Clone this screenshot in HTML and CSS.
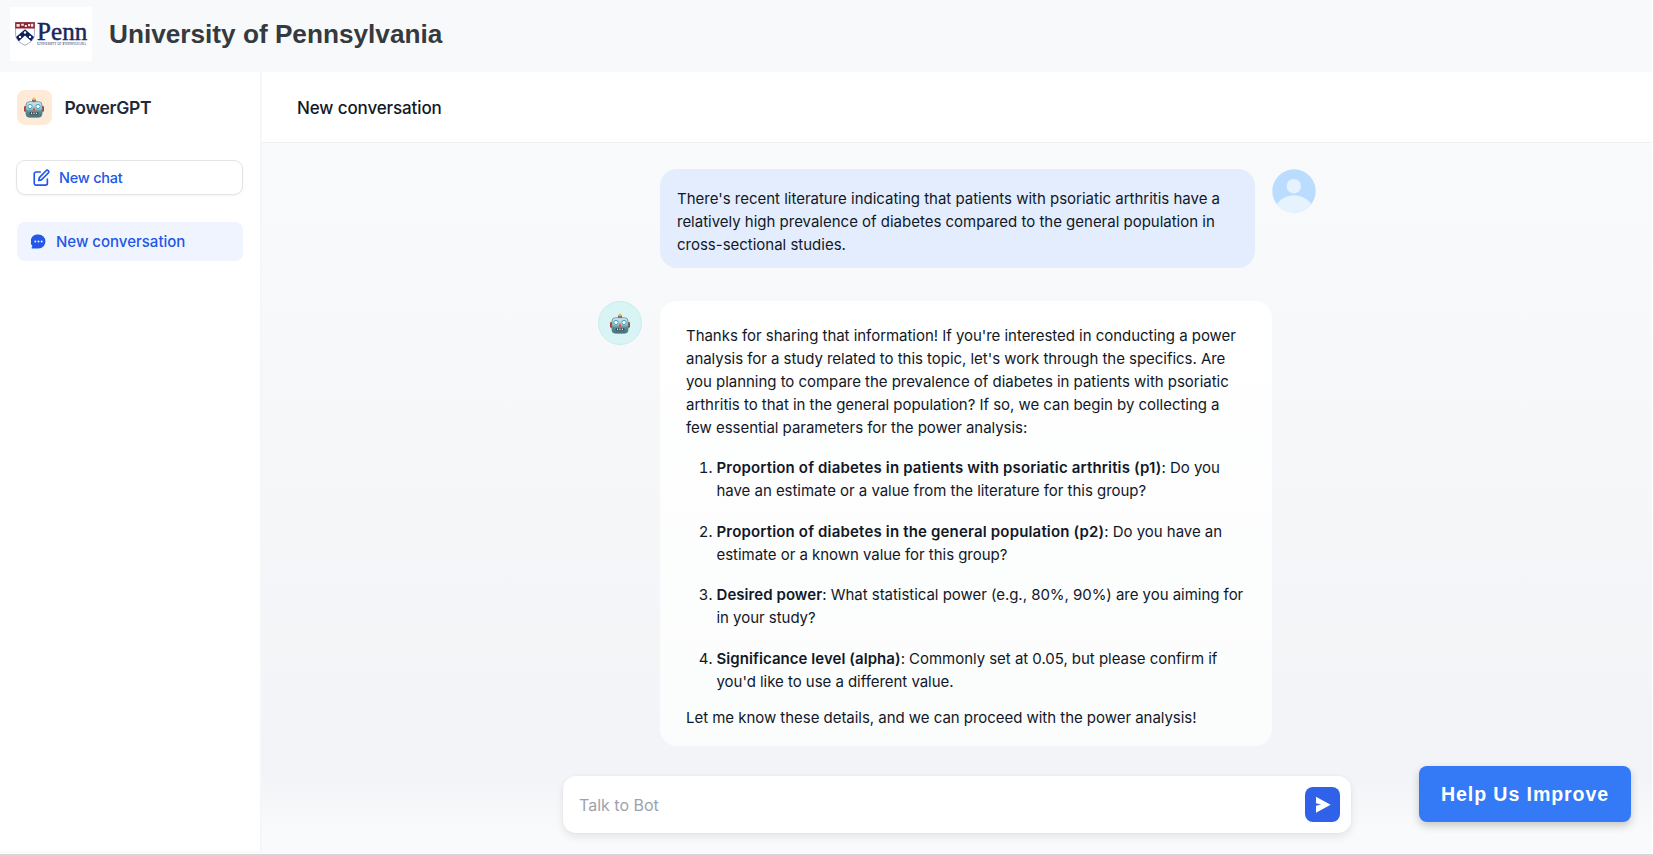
FILE: index.html
```html
<!DOCTYPE html>
<html lang="en">
<head>
<meta charset="utf-8">
<title>PowerGPT</title>
<link rel="stylesheet" href="styles.css">
</head>
<body>
<svg class="defs" aria-hidden="true">
  <defs>
    <linearGradient id="metal" x1="0" y1="0" x2="0" y2="1">
      <stop offset="0" stop-color="#cfe6e8"/><stop offset=".45" stop-color="#a5c6ca"/><stop offset=".6" stop-color="#5f929b"/><stop offset="1" stop-color="#3d6f7a"/>
    </linearGradient>
    <symbol id="robot" viewBox="0 0 20 20">
      <rect x="0" y="8.4" width="3" height="5.8" rx="1.2" fill="#a8403f"/>
      <rect x="17" y="8.4" width="3" height="5.8" rx="1.2" fill="#a8403f"/>
      <rect x="8.1" y="2" width="3.8" height="2.8" fill="#55508c"/>
      <circle cx="10" cy="1.5" r="1.5" fill="#f5b63f"/>
      <rect x="1.9" y="4.2" width="16.2" height="15.6" rx="3.6" fill="url(#metal)" stroke="#56828a" stroke-width=".7"/>
      <circle cx="6" cy="9" r="2.1" fill="#fff" stroke="#35a5c8" stroke-width="1"/>
      <circle cx="14" cy="9" r="2.1" fill="#fff" stroke="#35a5c8" stroke-width="1"/>
      <path d="M10 9.600l1.500 3.300h-3z" fill="#e2483d"/>
      <rect x="5.6" y="14.6" width="8.8" height="2.3" rx=".8" fill="#42484c"/>
      <path d="M7 15h1.100v1.500H7zM9.400 15h1.100v1.500H9.400zM11.800 15h1.100v1.500h-1.100z" fill="#e9eeee"/>
    </symbol>
  </defs>
</svg>
<div class="app">
  <header class="banner">
    <div class="logo">
      <svg class="shield" viewBox="0 0 20 24">
        <path d="M.6.6h18.800v12c0 5-4.500 8.400-9.400 10.700C5.100 21 .6 17.600.6 12.600z" fill="#fff" stroke="#8d97b5" stroke-width=".8"/>
        <path d="M.2.2h19.600v6.300H.2z" fill="#8f2430"/>
        <path d="M1.500 2h3.200v2.800H1.500zM6.200 1.800h2.600v2H6.200zM9.800 3h2v1.900h-2zM13 1.900h2.200v2.400H13zM16 1.800h2.300v2.900H16z" fill="#f4e9ec"/>
        <path d="M10 7.200l9 7.800-2.800 4.200L10 13.600l-6.200 5.600L1 15z" fill="#10205f"/>
        <g fill="#fff"><circle cx="10" cy="10.500" r="1.200"/><circle cx="5" cy="14.900" r="1.200"/><circle cx="15" cy="14.900" r="1.200"/></g>
      </svg>
      <div class="wordmark"><span class="penn">Penn</span><span class="penn-sub">University of Pennsylvania</span></div>
    </div>
    <h1 class="school">University of Pennsylvania</h1>
  </header>
  <div class="body">
    <aside class="sidebar">
      <div class="brand">
        <div class="brand-icon"><svg class="robot"><use href="#robot"/></svg></div>
        <span class="brand-name">PowerGPT</span>
      </div>
      <button class="new-chat">
        <svg class="edit" viewBox="0 0 24 24" fill="none" stroke="currentColor" stroke-width="2.200" stroke-linecap="round" stroke-linejoin="round"><path d="M11 4H5.500A2.500 2.500 0 0 0 3 6.500v12.500A2.500 2.500 0 0 0 5.500 21.500h12.500a2.500 2.500 0 0 0 2.500-2.500V13.500"/><path d="M18.700 2.300a2.100 2.100 0 0 1 3 3L12.500 14.500 9 15.300l.8-3.800z"/></svg>
        <span>New chat</span>
      </button>
      <div class="conversation">
        <svg class="bubble-icon" viewBox="0 0 16 16"><path d="M8 .6a7.400 7.400 0 1 1 0 14.800H1.200c-.6 0-.8-.5-.5-1l.8-1.500A7.400 7.400 0 0 1 8 .6z" fill="currentColor"/><g fill="#eff4ff"><circle cx="4.600" cy="8" r="1.050"/><circle cx="8" cy="8" r="1.050"/><circle cx="11.400" cy="8" r="1.050"/></g></svg>
        <span>New conversation</span>
      </div>
    </aside>
    <main class="main">
      <div class="chat-title"><span>New conversation</span></div>
      <div class="chat">
        <div class="row row-user">
          <div class="msg msg-user">There's recent literature indicating that patients with psoriatic arthritis have a<br>relatively high prevalence of diabetes compared to the general population in<br>cross-sectional studies.</div>
          <svg class="avatar" viewBox="0 0 44 44"><clipPath id="round"><circle cx="22" cy="22" r="21.700"/></clipPath><g clip-path="url(#round)"><rect width="44" height="44" fill="#b9dcff"/><circle cx="21.800" cy="17.200" r="7.200" fill="#e6f3ff"/><circle cx="22" cy="48" r="21.700" fill="#e6f3ff"/></g></svg>
        </div>
        <div class="row row-bot">
          <div class="avatar bot-avatar"><svg class="robot"><use href="#robot"/></svg></div>
          <div class="msg msg-bot">
            <p>Thanks for sharing that information! If you're interested in conducting a power<br>analysis for a study related to this topic, let's work through the specifics. Are<br>you planning to compare the prevalence of diabetes in patients with psoriatic<br>arthritis to that in the general population? If so, we can begin by collecting a<br>few essential parameters for the power analysis:</p>
            <ol class="params">
              <li><b>Proportion of diabetes in patients with psoriatic arthritis (p1)</b>: Do you<br>have an estimate or a value from the literature for this group?</li>
              <li><b>Proportion of diabetes in the general population (p2)</b>: Do you have an<br>estimate or a known value for this group?</li>
              <li><b class="tight">Desired power</b>: What statistical power (e.g., 80%, 90%) are you aiming for<br>in your study?</li>
              <li><b class="tight">Significance level (alpha)</b>: Commonly set at 0.05, but please confirm if<br>you'd like to use a different value.</li>
            </ol>
            <p>Let me know these details, and we can proceed with the power analysis!</p>
          </div>
        </div>
        <div class="composer">
          <span class="placeholder">Talk to Bot</span>
          <button class="send" aria-label="Send"><svg viewBox="0 0 35 35"><path d="M11 9.700v6.600l5 1.200-5 1.200v7L25.600 17.700z" fill="#fff"/></svg></button>
        </div>
      </div>
    </main>
  </div>
</div>
<button class="help">Help Us Improve</button>
</body>
</html>
```
FILE: styles.css
```css
* { box-sizing: border-box; }
body { margin: 0; font-family: Inter, "Liberation Sans", sans-serif; color: #111827; overflow: hidden; }
button { font-family: inherit; margin: 0; }
.defs { position: absolute; width: 0; height: 0; }
.app { height: 856px; display: flex; flex-direction: column; border-right: 1px solid #d9d9dc; border-bottom: 2px solid #d6d6d8; background: #fff; padding: 0 1px 1px 0; }

.banner { height: 72px; flex: none; display: flex; align-items: flex-start; padding: 7px 10px; gap: 17px; background: #f8f9fb; }
.logo { width: 82px; height: 54px; background: #fff; display: flex; padding: 15px 0 0 5px; gap: 2px; }
.shield { width: 20px; height: 24px; flex: none; }
.wordmark { display: flex; flex-direction: column; color: #17285f; font-family: "Liberation Serif", serif; white-space: nowrap; }
.penn { font-size: 25px; line-height: 19px; letter-spacing: .1px; -webkit-text-stroke: .5px #17285f; }
.penn-sub { font-size: 4.800px; line-height: 5px; font-variant: small-caps; }
.school { margin: 0; font: bold 26.200px/54px "Liberation Sans", Arial, sans-serif; color: #343a40; }

.body { flex: 1; display: flex; min-height: 0; background: #f9fafb; }
.sidebar { width: 262px; flex: none; margin-bottom: 2px; background: #fff; border-right: 2px solid #f5f6f8; padding: 18px 17px 0; }
.brand { display: flex; align-items: center; gap: 13px; height: 35px; margin-left: -.5px; }
.brand-icon { width: 35px; height: 35px; border-radius: 8px; background: #fdebd8; display: flex; align-items: center; justify-content: center; }
.robot { width: 20px; height: 21px; }
.brand-name { font-size: 17.500px; font-weight: 600; letter-spacing: -.3px; color: #1f2937; }
.new-chat { width: 227px; height: 35px; margin: 35px 0 0 -1px; border: 1px solid #e2e4e8; border-radius: 9px; background: #fff; box-shadow: 0 1px 2px rgba(16,24,40,.05); color: #2257e7; display: flex; align-items: center; gap: 9px; padding: 0 15px; font-size: 14.500px; font-weight: 500; letter-spacing: -.25px; }
.edit { width: 18px; height: 18px; }
.conversation { height: 39px; width: 226px; margin-top: 27px; border-radius: 8px; background: #eff4ff; color: #2257e7; display: flex; align-items: center; gap: 10px; padding-left: 14px; font-size: 15px; font-weight: 500; }
.bubble-icon { width: 15px; height: 15px; }

.main { flex: 1; display: flex; flex-direction: column; }
.chat-title { height: 71px; flex: none; background: #fff; border-bottom: 1px solid #eff0f3; padding: 2px 0 0 35px; display: flex; align-items: center; font-size: 17px; font-weight: 500; letter-spacing: -.12px; }
.chat { flex: 1; background: linear-gradient(#f9fafb 0%, #f2f4f7 86%, #f3f4f7 89%, #f9fafb 97%); padding-top: 26px; display: flex; flex-direction: column; }
.row { display: flex; align-items: flex-start; gap: 17px; font-size: 15px; line-height: 23.080px; white-space: nowrap; letter-spacing: -.035px; }
.row-user { margin-left: 398px; letter-spacing: -.01px; }
.row-bot { margin: 33px 0 0 336px; gap: 18px; }
.avatar { width: 44px; height: 44px; flex: none; }
.bot-avatar { border-radius: 50%; background: #d9f4f5; border: 1px solid #cdebec; display: flex; align-items: center; justify-content: center; }
.msg { border-radius: 17px; }
.msg-user { width: 595px; height: 99px; background: #e3edfd; padding: 17.500px 17px; }
.msg-bot { width: 612px; height: 445px; background: linear-gradient(#fff, #fbfcfc); padding: 22.500px 26px; }
.msg-bot p { margin: 0; }
.params { margin: 17.300px 0 13px; padding-left: 30.500px; display: flex; flex-direction: column; gap: 17.400px; }
.params b { font-weight: 600; letter-spacing: .17px; }
.params .tight { letter-spacing: .06px; }
.composer { width: 788px; height: 57px; margin: 30px 0 0 301px; background: #fff; border-radius: 13px; box-shadow: 0 4px 8px rgba(16,24,40,.09), 0 0 3px rgba(16,24,40,.04); display: flex; align-items: center; justify-content: space-between; padding: 0 11px 0 16px; }
.placeholder { font-size: 16px; color: #9ca3af; }
.send { width: 35px; height: 35px; padding: 0; border: 0; border-radius: 8px; background: #2f62e9; }
.send svg { display: block; width: 35px; height: 35px; }
.help { position: absolute; left: 1419px; top: 766px; width: 212px; height: 56px; border: 0; border-radius: 8px; background: #3479f6; color: #fff; font: bold 19.600px "Liberation Sans", Arial, sans-serif; letter-spacing: .9px; box-shadow: 0 4px 9px rgba(0,0,0,.2); padding: 0; }
```
